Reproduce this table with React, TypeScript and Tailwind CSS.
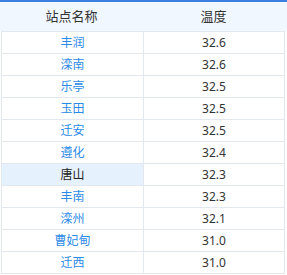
const rows = [
  { name: "丰润", temp: "32.6" },
  { name: "滦南", temp: "32.6" },
  { name: "乐亭", temp: "32.5" },
  { name: "玉田", temp: "32.5" },
  { name: "迁安", temp: "32.5" },
  { name: "遵化", temp: "32.4" },
  { name: "唐山", temp: "32.3", active: true },
  { name: "丰南", temp: "32.3" },
  { name: "滦州", temp: "32.1" },
  { name: "曹妃甸", temp: "31.0" },
  { name: "迁西", temp: "31.0" },
];

export default function App() {
  return (
    <div
      className="w-[287px] h-[275px] overflow-hidden bg-white"
      style={{ fontFamily: '"Noto Sans", "Noto Sans CJK SC", sans-serif' }}
    >
      {/* header */}
      <div className="flex h-[31px] border-t-2 border-[#3d7fe0] bg-[#f0f7fe] text-[13px] text-[#333]">
        <div className="flex w-[143px] items-center justify-center">站点名称</div>
        <div className="flex w-[141px] items-center justify-center">温度</div>
      </div>
      {/* body */}
      <div className="ml-px w-[284px] border-l border-r border-t border-[#e3e8ee]">
        {rows.map((r) => (
          <div key={r.name} className="flex h-[22px] border-b border-[#e3e8ee] text-[12px]">
            <div
              className={
                "flex w-[142px] items-center justify-center border-r border-[#e3e8ee] " +
                (r.active ? "bg-[#e5f1fc] text-[#222]" : "text-[#2b8ae6]")
              }
            >
              {r.name}
            </div>
            <div className="flex flex-1 items-center justify-center text-[#333]">{r.temp}</div>
          </div>
        ))}
      </div>
    </div>
  );
}
